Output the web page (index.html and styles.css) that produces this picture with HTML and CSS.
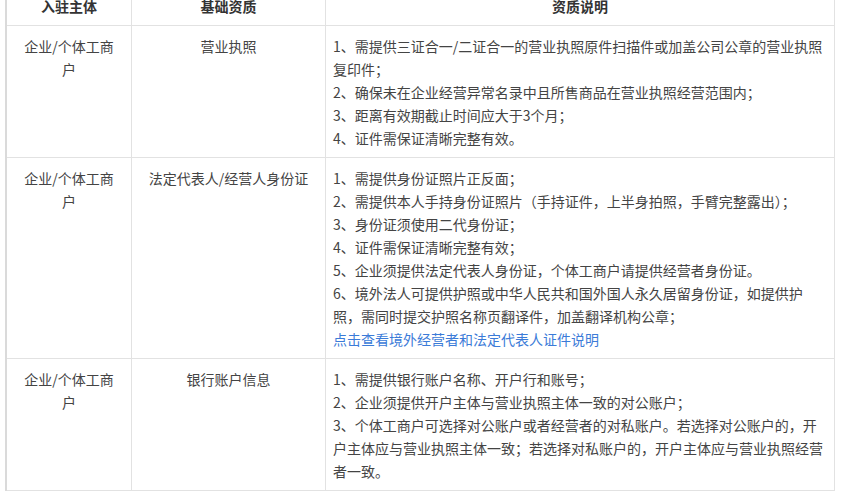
FILE: index.html
```html
<!DOCTYPE html>
<html lang="zh-CN">
<head>
<meta charset="utf-8">
<title>资质说明</title>
<link rel="stylesheet" href="styles.css">
</head>
<body>
<div class="page">
  <table class="qual">
    <colgroup>
      <col class="c-subject">
      <col class="c-base">
      <col class="c-desc">
    </colgroup>
    <thead>
      <tr>
        <th class="cell-subject">入驻主体</th>
        <th>基础资质</th>
        <th>资质说明</th>
      </tr>
    </thead>
    <tbody>
      <tr>
        <td class="cell-subject">企业/个体工商户</td>
        <td class="cell-base">营业执照</td>
        <td class="cell-desc">1、需提供三证合一/二证合一的营业执照原件扫描件或加盖公司公章的营业执照复印件；<br>2、确保未在企业经营异常名录中且所售商品在营业执照经营范围内；<br>3、距离有效期截止时间应大于3个月；<br>4、证件需保证清晰完整有效。</td>
      </tr>
      <tr>
        <td class="cell-subject">企业/个体工商户</td>
        <td class="cell-base">法定代表人/经营人身份证</td>
        <td class="cell-desc">1、需提供身份证照片正反面；<br>2、需提供本人手持身份证照片（手持证件，上半身拍照，手臂完整露出）；<br>3、身份证须使用二代身份证；<br>4、证件需保证清晰完整有效；<br>5、企业须提供法定代表人身份证，个体工商户请提供经营者身份证。<br>6、境外法人可提供护照或中华人民共和国外国人永久居留身份证，如提供护照，需同时提交护照名称页翻译件，加盖翻译机构公章；<br><a class="link" href="#">点击查看境外经营者和法定代表人证件说明</a></td>
      </tr>
      <tr>
        <td class="cell-subject">企业/个体工商户</td>
        <td class="cell-base">银行账户信息</td>
        <td class="cell-desc">1、需提供银行账户名称、开户行和账号；<br>2、企业须提供开户主体与营业执照主体一致的对公账户；<br>3、个体工商户可选择对公账户或者经营者的对私账户。若选择对公账户的，开户主体应与营业执照主体一致；若选择对私账户的，开户主体应与营业执照经营者一致。</td>
      </tr>
    </tbody>
  </table>
</div>
</body>
</html>
```

FILE: styles.css
```css
html, body {
  margin: 0;
  padding: 0;
  background: #ffffff;
}

body {
  font-family: "Noto Sans CJK SC", "Noto Sans", sans-serif;
  font-size: 14px;
  line-height: 23px;
  color: #444444;
  overflow: hidden;
}

.page {
  padding-left: 5px;
}

.qual {
  margin-top: -15px;
  width: 830px;
  table-layout: fixed;
  border-collapse: separate;
  border-spacing: 0;
  border-top: 1px solid #e2e2e2;
  border-left: 2px solid #dadada;
}

.c-subject { width: 125px; }
.c-base { width: 194px; }
.c-desc { width: 509px; }

.qual th,
.qual td {
  border-right: 1px solid #e2e2e2;
  border-bottom: 1px solid #e2e2e2;
  padding: 9px 7px 7px 7px;
  vertical-align: top;
  text-align: center;
}

.qual th {
  font-weight: bold;
  color: #333333;
}

.qual .cell-subject {
  padding-left: 14px;
  padding-right: 14px;
}

.qual .cell-desc {
  text-align: left;
}

.link {
  color: #3b7bd8;
  text-decoration: none;
}
```
